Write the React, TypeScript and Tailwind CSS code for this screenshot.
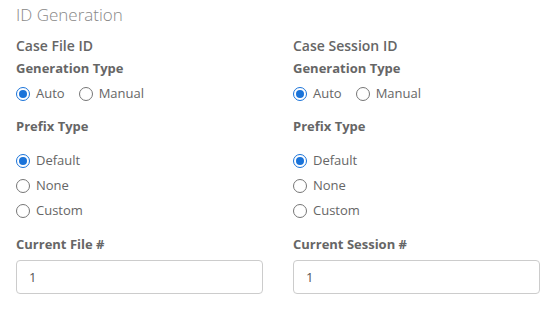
import React from "react";

function Radio({ checked, label }: { checked?: boolean; label: string }) {
  return (
    <label className="flex items-center gap-[6px] h-[20px]">
      <span
        className={
          "w-[14px] h-[14px] rounded-full border flex items-center justify-center bg-white " +
          (checked ? "border-[#1a73d9]" : "border-[#767676]")
        }
      >
        {checked && <span className="w-[8px] h-[8px] rounded-full bg-[#1a73d9]" />}
      </span>
      <span className="text-[13px] text-[#666]">{label}</span>
    </label>
  );
}

function Column({ title, numLabel }: { title: string; numLabel: string }) {
  return (
    <div className="flex flex-col">
      <div className="h-[24px] flex items-center text-[14px] font-semibold text-[#666] mt-[33px]">{title}</div>
      <div className="h-[20px] flex items-center text-[13px] font-bold text-[#666] mt-[2px]">Generation Type</div>
      <div className="flex gap-[14px] mt-[5px]">
        <Radio checked label="Auto" />
        <Radio label="Manual" />
      </div>
      <div className="h-[20px] flex items-center text-[13px] font-bold text-[#666] mt-[13px]">Prefix Type</div>
      <div className="flex flex-col gap-[5px] mt-[14px]">
        <Radio checked label="Default" />
        <Radio label="None" />
        <Radio label="Custom" />
      </div>
      <div className="h-[20px] flex items-center text-[13px] font-bold text-[#666] mt-[14px]">{numLabel}</div>
      <input
        readOnly
        value="1"
        className="mt-[5px] h-[34px] w-full rounded-[4px] border border-[#ccc] px-[12px] text-[13px] text-[#555] outline-none"
      />
    </div>
  );
}

export default function App() {
  return (
    <div
      className="w-[556px] h-[309px] bg-white relative px-[16px]"
      style={{ fontFamily: '"Open Sans", sans-serif' }}
    >
      <div className="absolute left-[16px] top-[3px] text-[17px] font-light text-[#888] leading-[24px]">ID Generation</div>
      <div className="grid grid-cols-2 gap-[30px]">
        <Column title="Case File ID" numLabel="Current File #" />
        <Column title="Case Session ID" numLabel="Current Session #" />
      </div>
    </div>
  );
}
